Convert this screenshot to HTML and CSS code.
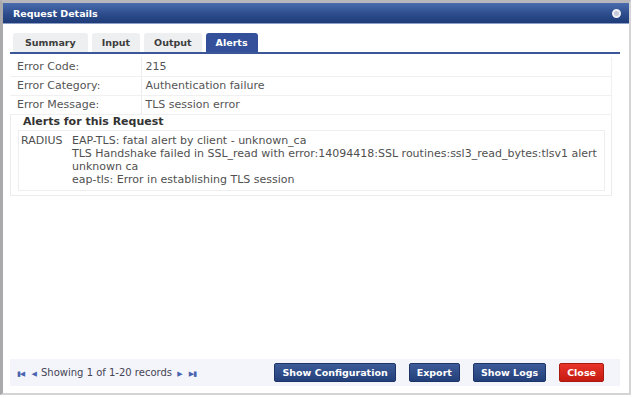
FILE: index.html
```html
<!DOCTYPE html>
<html>
	<head>
		<link rel="stylesheet" href="styles.css">
	</head>
	<body>
		<div class="dialog">
			<div class="titlebar">
				<span class="title">Request Details</span>
				<span class="closer"></span>
			</div>
			<div class="content">
				<div class="tabs">
					<div class="tab">Summary</div>
					<div class="tab">Input</div>
					<div class="tab">Output</div>
					<div class="tab active">Alerts</div>
				</div>
				<table class="info">
					<tr><td class="label">Error Code:</td><td>215</td></tr>
					<tr><td class="label">Error Category:</td><td>Authentication failure</td></tr>
					<tr><td class="label">Error Message:</td><td>TLS session error</td></tr>
				</table>
				<div class="alerts">
					<div class="legend">Alerts for this Request</div>
					<div class="alertbox">
						<div class="source">RADIUS</div>
						<div class="msgs">
							EAP-TLS: fatal alert by client - unknown_ca<br/>
							TLS Handshake failed in SSL_read with error:14094418:SSL routines:ssl3_read_bytes:tlsv1 alert unknown ca<br/>
							eap-tls: Error in establishing TLS session
						</div>
					</div>
				</div>
				<div class="spacer"></div>
				<div class="footer">
					<div class="pager">
						<span class="nav">&#9646;&#9664;</span>
						<span class="nav">&#9664;</span>
						Showing 1 of 1-20 records
						<span class="nav">&#9654;</span>
						<span class="nav">&#9654;&#9646;</span>
					</div>
					<div class="buttons">
						<span class="btn">Show Configuration</span>
						<span class="btn">Export</span>
						<span class="btn">Show Logs</span>
						<span class="btn red">Close</span>
					</div>
				</div>
			</div>
		</div>
	</body>
</html>
```

FILE: styles.css
```css
*{
	margin: 0;
	padding: 0;
	box-sizing: border-box;
}
body{
	width: 633px;
	height: 398px;
	background: #fff;
	font-family: "DejaVu Sans", Verdana, sans-serif;
	font-size: 11px;
	color: #444;
}
.dialog{
	width: 631px;
	height: 395px;
	border: 3px solid #a9a9ab;
	border-right: 2px solid #d4d4d6;
	border-bottom: 2px solid #d4d4d6;
	border-top: 3px solid #b8b8bc;
	display: flex;
	flex-direction: column;
}
.titlebar{
	height: 21px;
	background: linear-gradient(#4a6cae, #2c4c8c 55%, #1f3c78);
	display: flex;
	align-items: center;
	justify-content: space-between;
	padding: 0 8px 0 10px;
	border-bottom: 1px solid #8ea0c8;
}
.title{
	color: #fff;
	font-weight: bold;
	font-size: 9.5px;
}
.closer{
	width: 9px;
	height: 9px;
	border-radius: 50%;
	background: #c4cad8;
	border: 2px solid #eef0f5;
}
.content{
	flex: 1;
	display: flex;
	flex-direction: column;
	padding: 9px 8px 7px 7px;
}
.tabs{
	display: flex;
	gap: 4px;
	border-bottom: 2px solid #3b5797;
	margin-right: 1px;
	padding-left: 3px;
}
.tab{
	height: 19px;
	padding: 0 10px;
	background: #eeeff1;
	border-radius: 3px 3px 0 0;
	font-weight: bold;
	font-size: 9.5px;
	color: #3d3d3d;
	line-height: 20px;
}
.tab:first-child{
	padding: 0 12px;
}
.tab.active{
	background: #34509a;
	color: #fff;
}
.info{
	border-collapse: collapse;
	width: 602px;
	margin-top: 3px;
	color: #555;
	font-size: 11px;
}
.info td{
	height: 19px;
	padding: 0 4px;
	border-bottom: 1px solid #f0f0f2;
	border-right: 1px solid #f0f0f2;
}
.info td.label{
	width: 131px;
	padding-left: 7px;
	border-right: 1px solid #ececee;
}
.alerts{
	width: 602px;
	border: 1px solid #ececee;
	border-top: none;
	padding: 0 6px 4px 7px;
}
.legend{
	font-weight: bold;
	color: #333;
	margin: 0 0 2px 5px;
	font-size: 11px;
}
.alertbox{
	border: 1px solid #eeeef0;
	display: flex;
	padding: 3px 2px 4px 2px;
	line-height: 13px;
	color: #505050;
}
.source{
	width: 51px;
}
.msgs{
	flex: 1;
}
.spacer{
	flex: 1;
}
.footer{
	height: 27px;
	background: #f4f5fb;
	display: flex;
	align-items: center;
	justify-content: space-between;
	padding: 0 16px 0 5px;
	margin-right: 1px;
}
.pager{
	color: #445;
	font-size: 10px;
}
.nav{
	color: #4a64b0;
	font-size: 7px;
	letter-spacing: -1px;
	margin: 0 2px;
}
.buttons{
	display: flex;
	gap: 13px;
}
.btn{
	height: 19px;
	line-height: 18px;
	padding: 0 7px;
	background: linear-gradient(#3c5b98, #24407a);
	color: #fff;
	font-weight: bold;
	font-size: 9.5px;
	border: 1px solid #1c3466;
	border-radius: 2px;
}
.btn.red{
	background: linear-gradient(#e8352a, #c51b12);
	border-color: #a81a10;
}
```
